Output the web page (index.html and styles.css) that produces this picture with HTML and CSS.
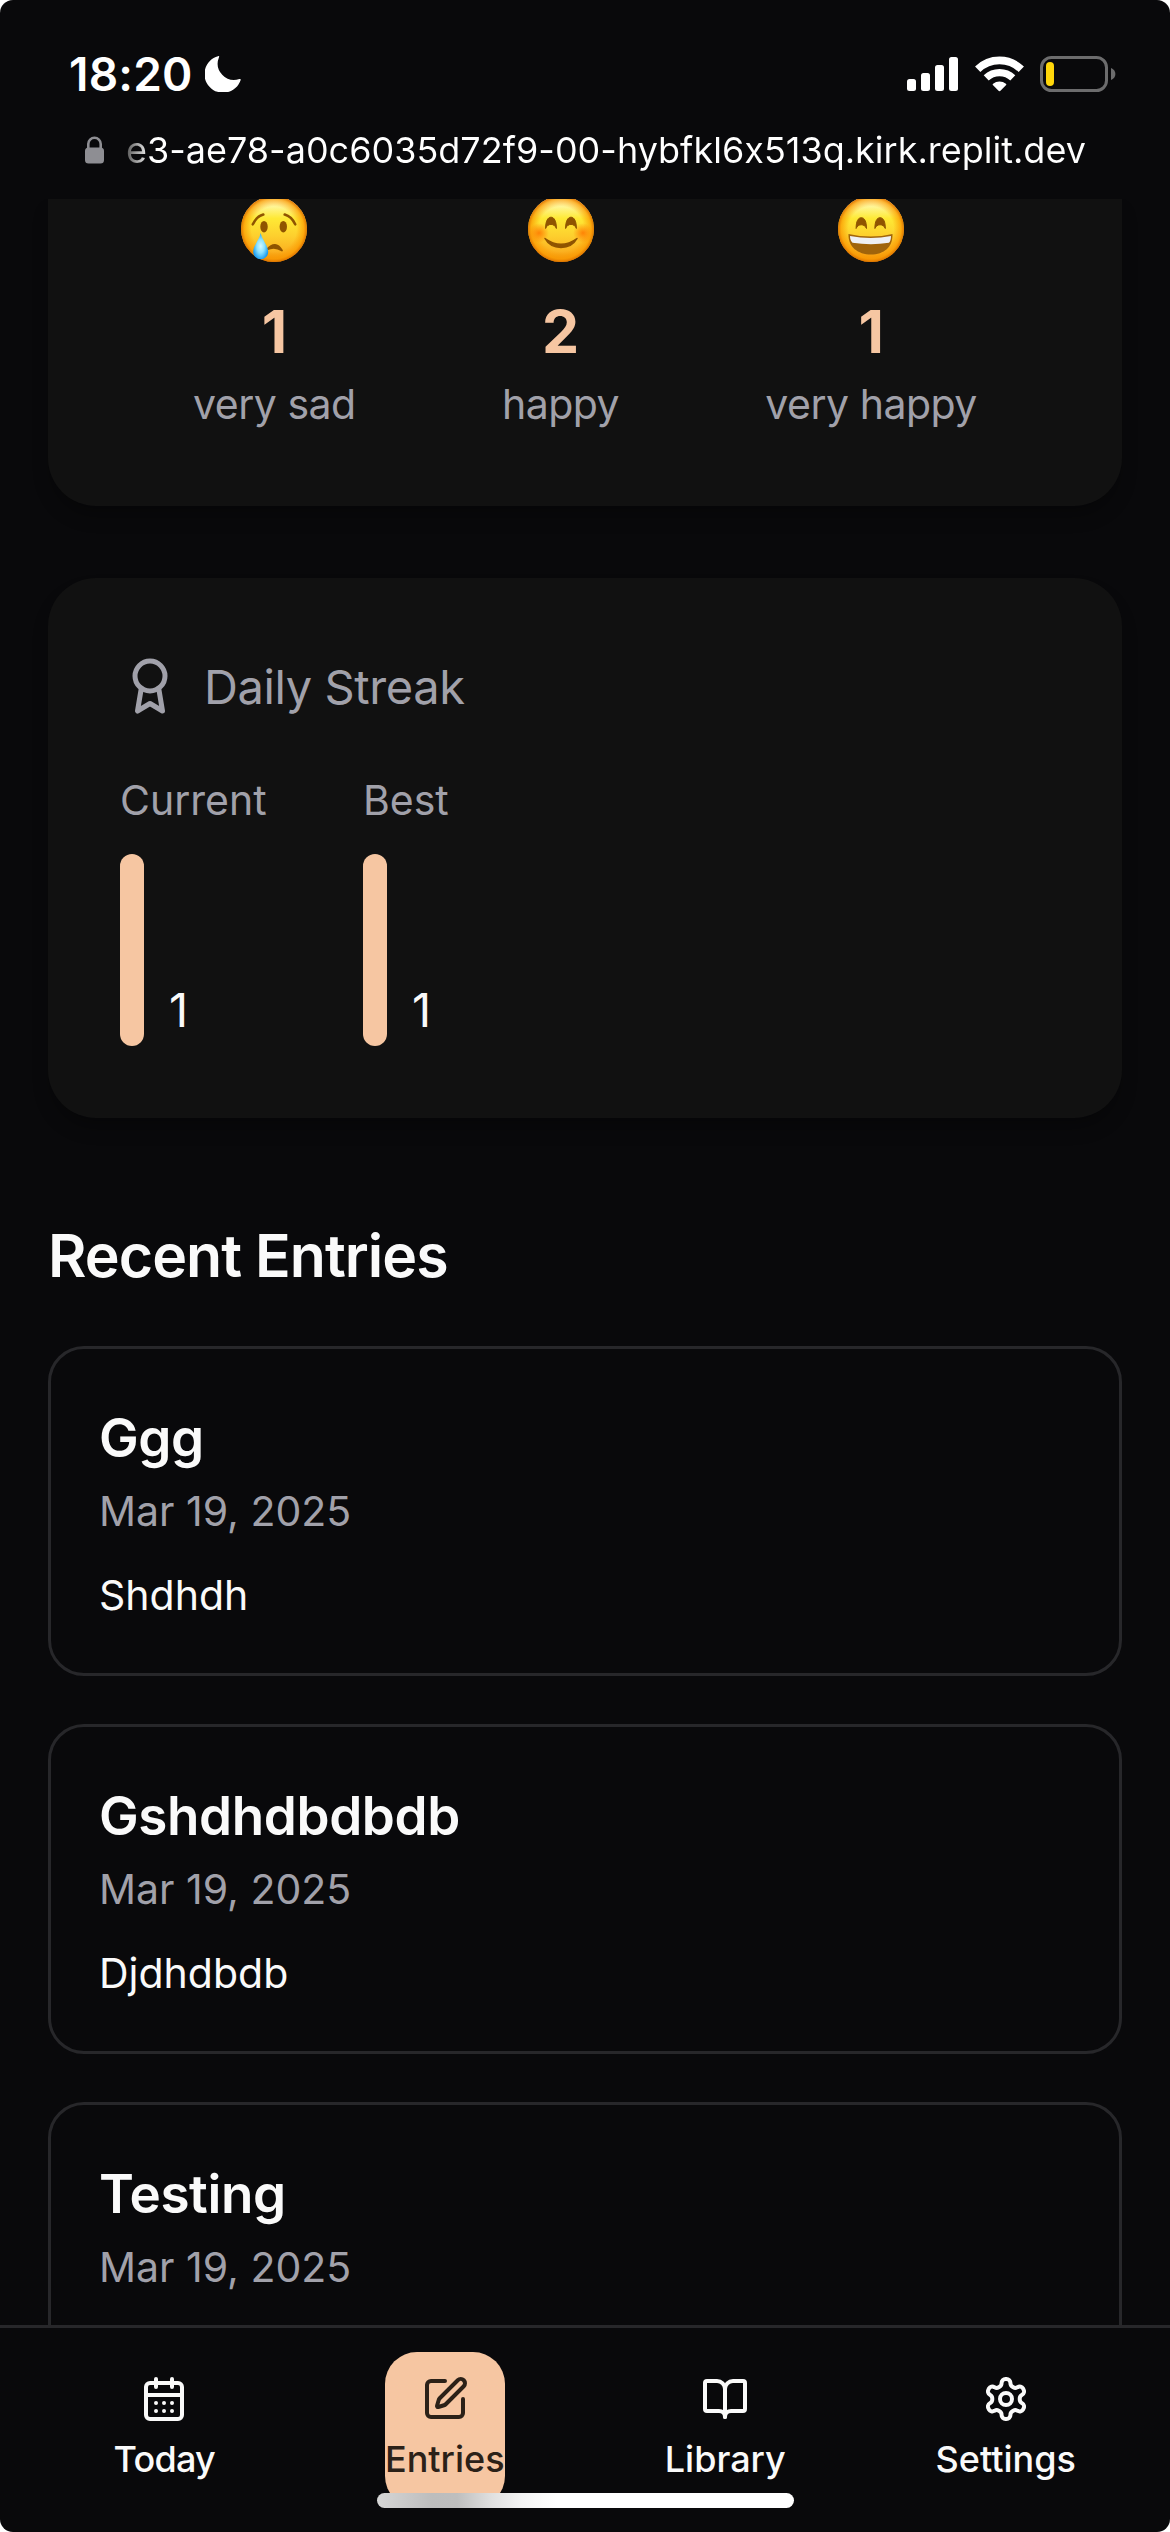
FILE: index.html
```html
<!DOCTYPE html>
<html lang="en">
<head>
<meta charset="utf-8">
<title>Entries</title>
<link rel="stylesheet" href="styles.css">
</head>
<body>
<svg class="defs" width="0" height="0">
  <defs>
    <linearGradient id="face" x1="0" y1="0" x2="0" y2="1">
      <stop offset="0" stop-color="#fffbd8"/>
      <stop offset=".14" stop-color="#fff7a0"/>
      <stop offset=".34" stop-color="#fee935"/>
      <stop offset=".6" stop-color="#fdd02e"/>
      <stop offset=".85" stop-color="#fbb020"/>
      <stop offset="1" stop-color="#ee8d08"/>
    </linearGradient>
    <radialGradient id="rim" cx=".5" cy=".5" r=".5">
      <stop offset=".68" stop-color="#fb9a00" stop-opacity="0"/>
      <stop offset=".9" stop-color="#fb9a00" stop-opacity=".7"/>
      <stop offset="1" stop-color="#dd7300" stop-opacity="1"/>
    </radialGradient>
    <radialGradient id="blush">
      <stop offset="0" stop-color="#ff7a00" stop-opacity=".9"/>
      <stop offset="1" stop-color="#ff7a00" stop-opacity="0"/>
    </radialGradient>
    <radialGradient id="tear" cx=".5" cy=".5" r=".56">
      <stop offset="0" stop-color="#d2f7ff"/>
      <stop offset=".45" stop-color="#8be2ff"/>
      <stop offset="1" stop-color="#0b93ee"/>
    </radialGradient>
  </defs>
</svg>
<div class="screen">
  <header class="top">
    <div class="status">
      <div class="clock">
        <span class="time">18:20</span>
        <svg class="moon" width="36" height="36" viewBox="0 0 36 36"><path fill="#fff" d="M14 1.2C14.6.3 13.9-.2 13 .2A18.6 18.6 0 1 0 35.600 24.200C36 23 35.400 22.600 34.400 23.100A16.500 16.500 0 0 1 14 1.200Z"/></svg>
      </div>
      <div class="indicators">
        <svg class="signal" width="51" height="36" viewBox="0 0 51 36" fill="#fff"><rect y="23" width="9" height="12" rx="2.500"/><rect x="14" y="17" width="9" height="18" rx="2.500"/><rect x="28" y="9" width="9" height="26" rx="2.500"/><rect x="42" y="1" width="9" height="34" rx="2.500"/></svg>
        <svg width="49" height="36" viewBox="0 0 49 36" fill="none" stroke="#fff"><path stroke-width="7.600" d="M2.700 13.300a31.200 31.200 0 0 1 43.600 0"/><path stroke-width="7.200" d="M11.200 21.900a19.200 19.200 0 0 1 26.600 0"/><path fill="#fff" stroke="none" d="M24.500 35.200c-.5 0-.8-.3-1.200-.7l-5.200-5.200c-.6-.6-.6-1.100 0-1.600a10 10 0 0 1 12.800 0c.6.500.6 1 0 1.600l-5.200 5.200c-.4.400-.7.700-1.200.7Z"/></svg>
        <svg width="76" height="36" viewBox="0 0 76 36"><rect x="1.500" y="1.500" width="65" height="33" rx="10" fill="none" stroke="#6c6c6d" stroke-width="3"/><rect x="6" y="6" width="8" height="24" rx="4" fill="#ffd60a"/><path fill="#6c6c6d" d="M71 12c2.600 1 4.400 3.300 4.400 6s-1.800 5-4.400 6Z"/></svg>
      </div>
    </div>
    <div class="address">
      <svg width="19" height="28" viewBox="0 0 19 28"><rect y="11.500" width="19" height="16" rx="3.500" fill="#8e8e93"/><path d="M3.300 13V8a6.200 6.200 0 0 1 12.400 0v5" fill="none" stroke="#8e8e93" stroke-width="2.600"/></svg>
      <span class="url">e3-ae78-a0c6035d72f9-00-hybfkl6x513q.kirk.replit.dev</span>
    </div>
  </header>

  <main class="content">
    <section class="card moods">
      <div class="mood">
        <svg class="emoji" width="66" height="66" viewBox="0 0 66 66">
          <circle cx="33" cy="33" r="33" fill="url(#face)"/><circle cx="33" cy="33" r="33" fill="url(#rim)"/>
          <ellipse cx="23" cy="30.700" rx="3.700" ry="5.800" fill="#8f5400"/><ellipse cx="42.300" cy="30.700" rx="3.700" ry="5.800" fill="#8f5400"/>
          <path d="M11.800 28.300Q15.500 20.500 22.300 18.600M54.200 28.300Q50.500 20.500 43.700 18.600" fill="none" stroke="#8f5400" stroke-width="2.600" stroke-linecap="round"/>
          <path d="M26 53.500Q34.500 44 41 54.500Q33.500 49.500 26 53.500Z" fill="#8f5400" stroke="#8f5400" stroke-width="1.800" stroke-linejoin="round"/>
          <path d="M19.700 37C21 44 27.200 49.500 27.200 55.800A7.500 7.500 0 0 1 12.200 55.800C12.200 49.500 18.400 44 19.700 37Z" fill="url(#tear)"/>
        </svg>
        <strong class="count">1</strong>
        <span class="label">very sad</span>
      </div>
      <div class="mood">
        <svg class="emoji" width="66" height="66" viewBox="0 0 66 66">
          <circle cx="33" cy="33" r="33" fill="url(#face)"/><circle cx="33" cy="33" r="33" fill="url(#rim)"/>
          <circle cx="11" cy="37" r="10" fill="url(#blush)"/><circle cx="55" cy="37" r="10" fill="url(#blush)"/>
          <path d="M17.600 32.500C17.600 25.500 19.600 21.200 23 21.200S28.400 25.500 28.400 32.500C26.500 27 19.500 27 17.600 32.500ZM37.600 32.500C37.600 25.500 39.600 21.200 43 21.200S48.400 25.500 48.400 32.500C46.500 27 39.500 27 37.600 32.500Z" fill="#8f5400" stroke="#8f5400" stroke-linejoin="round"/>
          <path d="M17 42.500Q33 54 49 42.500Q44 51.500 33 51.500T17 42.500Z" fill="#8f5400" stroke="#8f5400" stroke-width="1.500" stroke-linejoin="round"/>
        </svg>
        <strong class="count">2</strong>
        <span class="label">happy</span>
      </div>
      <div class="mood">
        <svg class="emoji" width="66" height="66" viewBox="0 0 66 66">
          <circle cx="33" cy="33" r="33" fill="url(#face)"/><circle cx="33" cy="33" r="33" fill="url(#rim)"/>
          <path d="M18.100 32.500C18.100 25.500 20 21.700 23.300 21.700S28.500 25.500 28.500 32.500C26.500 27.500 20 27.500 18.100 32.500ZM36.900 32.500C36.900 25.500 38.800 21.700 42.100 21.700S47.300 25.500 47.300 32.500C45.300 27.500 38.800 27.500 36.900 32.500Z" fill="#8f5400" stroke="#8f5400" stroke-linejoin="round"/>
          <path d="M10.500 38Q33 43 54.500 38C55 51 46 58.500 33 58.500S10 51 10.500 38Z" fill="#a0640b"/>
          <path d="M12 40Q33 44 53 40C53 43 52.200 45.800 51 46.800Q33 49.500 14.500 46.800C13 45.500 12 43 12 40Z" fill="#eef0f4"/>
        </svg>
        <strong class="count">1</strong>
        <span class="label">very happy</span>
      </div>
    </section>

    <section class="card streak">
      <h2 class="streak-title">
        <svg class="icon" width="60" height="60" viewBox="0 0 24 24"><path d="M15.477 12.890 17 22l-5-3-5 3 1.523-9.110"/><circle cx="12" cy="8" r="6"/></svg>
        <span>Daily Streak</span>
      </h2>
      <div class="streak-columns">
        <div class="streak-column">
          <span class="label">Current</span>
          <div class="meter"><i class="bar"></i><span class="value">1</span></div>
        </div>
        <div class="streak-column">
          <span class="label">Best</span>
          <div class="meter"><i class="bar"></i><span class="value">1</span></div>
        </div>
      </div>
    </section>

    <h1 class="heading">Recent Entries</h1>
    <div class="entries">
      <article class="entry">
        <h3 class="entry-title">Ggg</h3>
        <time class="entry-date">Mar 19, 2025</time>
        <p class="entry-text">Shdhdh</p>
      </article>
      <article class="entry">
        <h3 class="entry-title">Gshdhdbdbdb</h3>
        <time class="entry-date">Mar 19, 2025</time>
        <p class="entry-text">Djdhdbdb</p>
      </article>
      <article class="entry">
        <h3 class="entry-title">Testing</h3>
        <time class="entry-date">Mar 19, 2025</time>
      </article>
    </div>
  </main>

  <nav class="tabs">
    <a class="tab today">
      <svg class="icon" width="48" height="48" viewBox="0 0 24 24"><path d="M8 2v4M16 2v4M3 10h18M8 14h.01M12 14h.01M16 14h.01M8 18h.01M12 18h.01M16 18h.01"/><rect width="18" height="18" x="3" y="4" rx="2"/></svg>
      <span>Today</span>
    </a>
    <a class="tab active">
      <svg class="icon" width="48" height="48" viewBox="0 0 24 24"><path d="M12 3H5a2 2 0 0 0-2 2v14a2 2 0 0 0 2 2h14a2 2 0 0 0 2-2v-7"/><path d="M18.375 2.625a1 1 0 0 1 3 3l-9.013 9.014a2 2 0 0 1-.853.505l-2.873.840a.5.5 0 0 1-.620-.620l.840-2.873a2 2 0 0 1 .506-.852z"/></svg>
      <span>Entries</span>
    </a>
    <a class="tab">
      <svg class="icon" width="48" height="48" viewBox="0 0 24 24"><path d="M12 7v14"/><path d="M3 18a1 1 0 0 1-1-1V4a1 1 0 0 1 1-1h5a4 4 0 0 1 4 4 4 4 0 0 1 4-4h5a1 1 0 0 1 1 1v13a1 1 0 0 1-1 1h-6a3 3 0 0 0-3 3 3 3 0 0 0-3-3z"/></svg>
      <span>Library</span>
    </a>
    <a class="tab">
      <svg class="icon" width="48" height="48" viewBox="0 0 24 24"><path d="M12.220 2h-.440a2 2 0 0 0-2 2v.180a2 2 0 0 1-1 1.730l-.430.250a2 2 0 0 1-2 0l-.150-.080a2 2 0 0 0-2.730.730l-.220.380a2 2 0 0 0 .730 2.730l.150.100a2 2 0 0 1 1 1.720v.510a2 2 0 0 1-1 1.740l-.150.090a2 2 0 0 0-.730 2.730l.220.380a2 2 0 0 0 2.730.730l.150-.080a2 2 0 0 1 2 0l.430.250a2 2 0 0 1 1 1.730V20a2 2 0 0 0 2 2h.440a2 2 0 0 0 2-2v-.180a2 2 0 0 1 1-1.730l.430-.250a2 2 0 0 1 2 0l.150.080a2 2 0 0 0 2.730-.730l.220-.390a2 2 0 0 0-.730-2.730l-.150-.080a2 2 0 0 1-1-1.740v-.500a2 2 0 0 1 1-1.740l.150-.090a2 2 0 0 0 .730-2.730l-.220-.380a2 2 0 0 0-2.730-.730l-.150.080a2 2 0 0 1-2 0l-.430-.250a2 2 0 0 1-1-1.730V4a2 2 0 0 0-2-2z"/><circle cx="12" cy="12" r="3"/></svg>
      <span>Settings</span>
    </a>
  </nav>
  <div class="home-indicator"></div>
</div>
</body>
</html>
```
FILE: styles.css
```css
* { box-sizing: border-box; margin: 0; padding: 0; }
html { background: #fff; }
body {
  font-family: Inter, "Liberation Sans", sans-serif;
  font-feature-settings: "calt" 0;
  color: #fafafa;
  width: 1170px;
  height: 2532px;
  overflow: hidden;
}
.defs { position: absolute; }
svg { display: block; flex: none; }
.screen {
  position: relative;
  display: flex;
  flex-direction: column;
  height: 2532px;
  background: #09090b;
  border-radius: 13px;
  overflow: hidden;
}

/* Status bar and address */
.top { flex: none; height: 199px; color: #fff; }
.status {
  display: flex;
  justify-content: space-between;
  align-items: center;
  height: 92px;
  padding: 56px 54px 0 69px;
}
.clock { display: flex; align-items: center; }
.time { width: 136px; font-size: 46px; line-height: 36px; font-weight: 600; letter-spacing: 0.2px; }
.indicators { display: flex; gap: 16px; }
.signal { margin-right: 1px; }
.address { display: flex; align-items: center; padding: 28px 0 0 85px; gap: 22px; }
.url {
  font-size: 36px;
  line-height: 60px;
  white-space: nowrap;
  background: linear-gradient(90deg, #555, #fff 24px);
  -webkit-background-clip: text;
  background-clip: text;
  color: transparent;
}

/* Scrolled page content */
.content { flex: 1; min-height: 0; overflow: hidden; padding: 0 48px; }
.card { background: #111; box-shadow: 0 12px 18px -3px rgba(0, 0, 0, .3); }
.moods {
  display: flex;
  justify-content: space-around;
  height: 307px;
  padding: 0 72px;
  border-radius: 0 0 48px 48px;
}
.mood { display: flex; flex-direction: column; align-items: center; }
.mood .label { letter-spacing: -0.5px; }
.emoji { margin: -3px 0 28px; }
.count { font-size: 59px; line-height: 84px; font-weight: 700; color: #f6c6a2; }
.label { font-size: 41px; line-height: 60px; color: #a1a1aa; white-space: nowrap; }
.streak { margin-top: 72px; padding: 72px; border-radius: 48px; }
.icon { fill: none; stroke: currentColor; stroke-width: 2; stroke-linecap: round; stroke-linejoin: round; }
.streak-title {
  display: flex;
  align-items: center;
  gap: 24px;
  height: 72px;
  font-size: 47px;
  font-weight: 400;
  letter-spacing: -0.4px;
  color: #a1a1aa;
}
.streak-columns { display: flex; gap: 96px; margin-top: 48px; }
.streak-column { width: 147px; }
.meter { display: flex; align-items: flex-end; gap: 25px; height: 192px; margin-top: 24px; }
.bar { width: 24px; height: 192px; border-radius: 12px; background: #f6c6a2; }
.value { font-size: 47px; line-height: 72px; }
.streak-column .label { display: block; }

.heading { margin-top: 96px; font-size: 59px; line-height: 84px; font-weight: 600; letter-spacing: -0.95px; }
.entries { display: flex; flex-direction: column; gap: 48px; margin-top: 48px; }
.entry { height: 330px; flex: none; padding: 48px; border: 3px solid #27272a; border-radius: 36px; }
.entry-title { font-size: 53px; line-height: 83px; font-weight: 600; letter-spacing: -0.4px; }
.entry-date { display: block; margin-top: 1px; font-size: 41px; line-height: 60px; color: #a1a1aa; }
.entry-text { margin-top: 24px; font-size: 41px; line-height: 60px; }

/* Bottom navigation */
.tabs {
  flex: none;
  display: grid;
  grid-template-columns: repeat(4, 1fr);
  justify-items: center;
  align-items: start;
  height: 207px;
  padding: 24px 24px 0;
  border-top: 3px solid #27272a;
}
.tab {
  display: flex;
  flex-direction: column;
  align-items: center;
  gap: 12px;
  height: 156px;
  padding-top: 23px;
  font-size: 36px;
  line-height: 48px;
  font-weight: 500;
}
.today { letter-spacing: -0.8px; }
.tab.active { width: 120px; border-radius: 32px; background: #f6c6a2; color: #2b2118; }
.home-indicator {
  position: absolute;
  left: 377px;
  bottom: 24px;
  width: 417px;
  height: 15px;
  border-radius: 8px;
  background: linear-gradient(90deg, #d6d6d6, #bdbdbd 55px, #bebebe 80px, #e0e0e0 115px, #f4f4f4 145px, #fff 180px);
}
```
